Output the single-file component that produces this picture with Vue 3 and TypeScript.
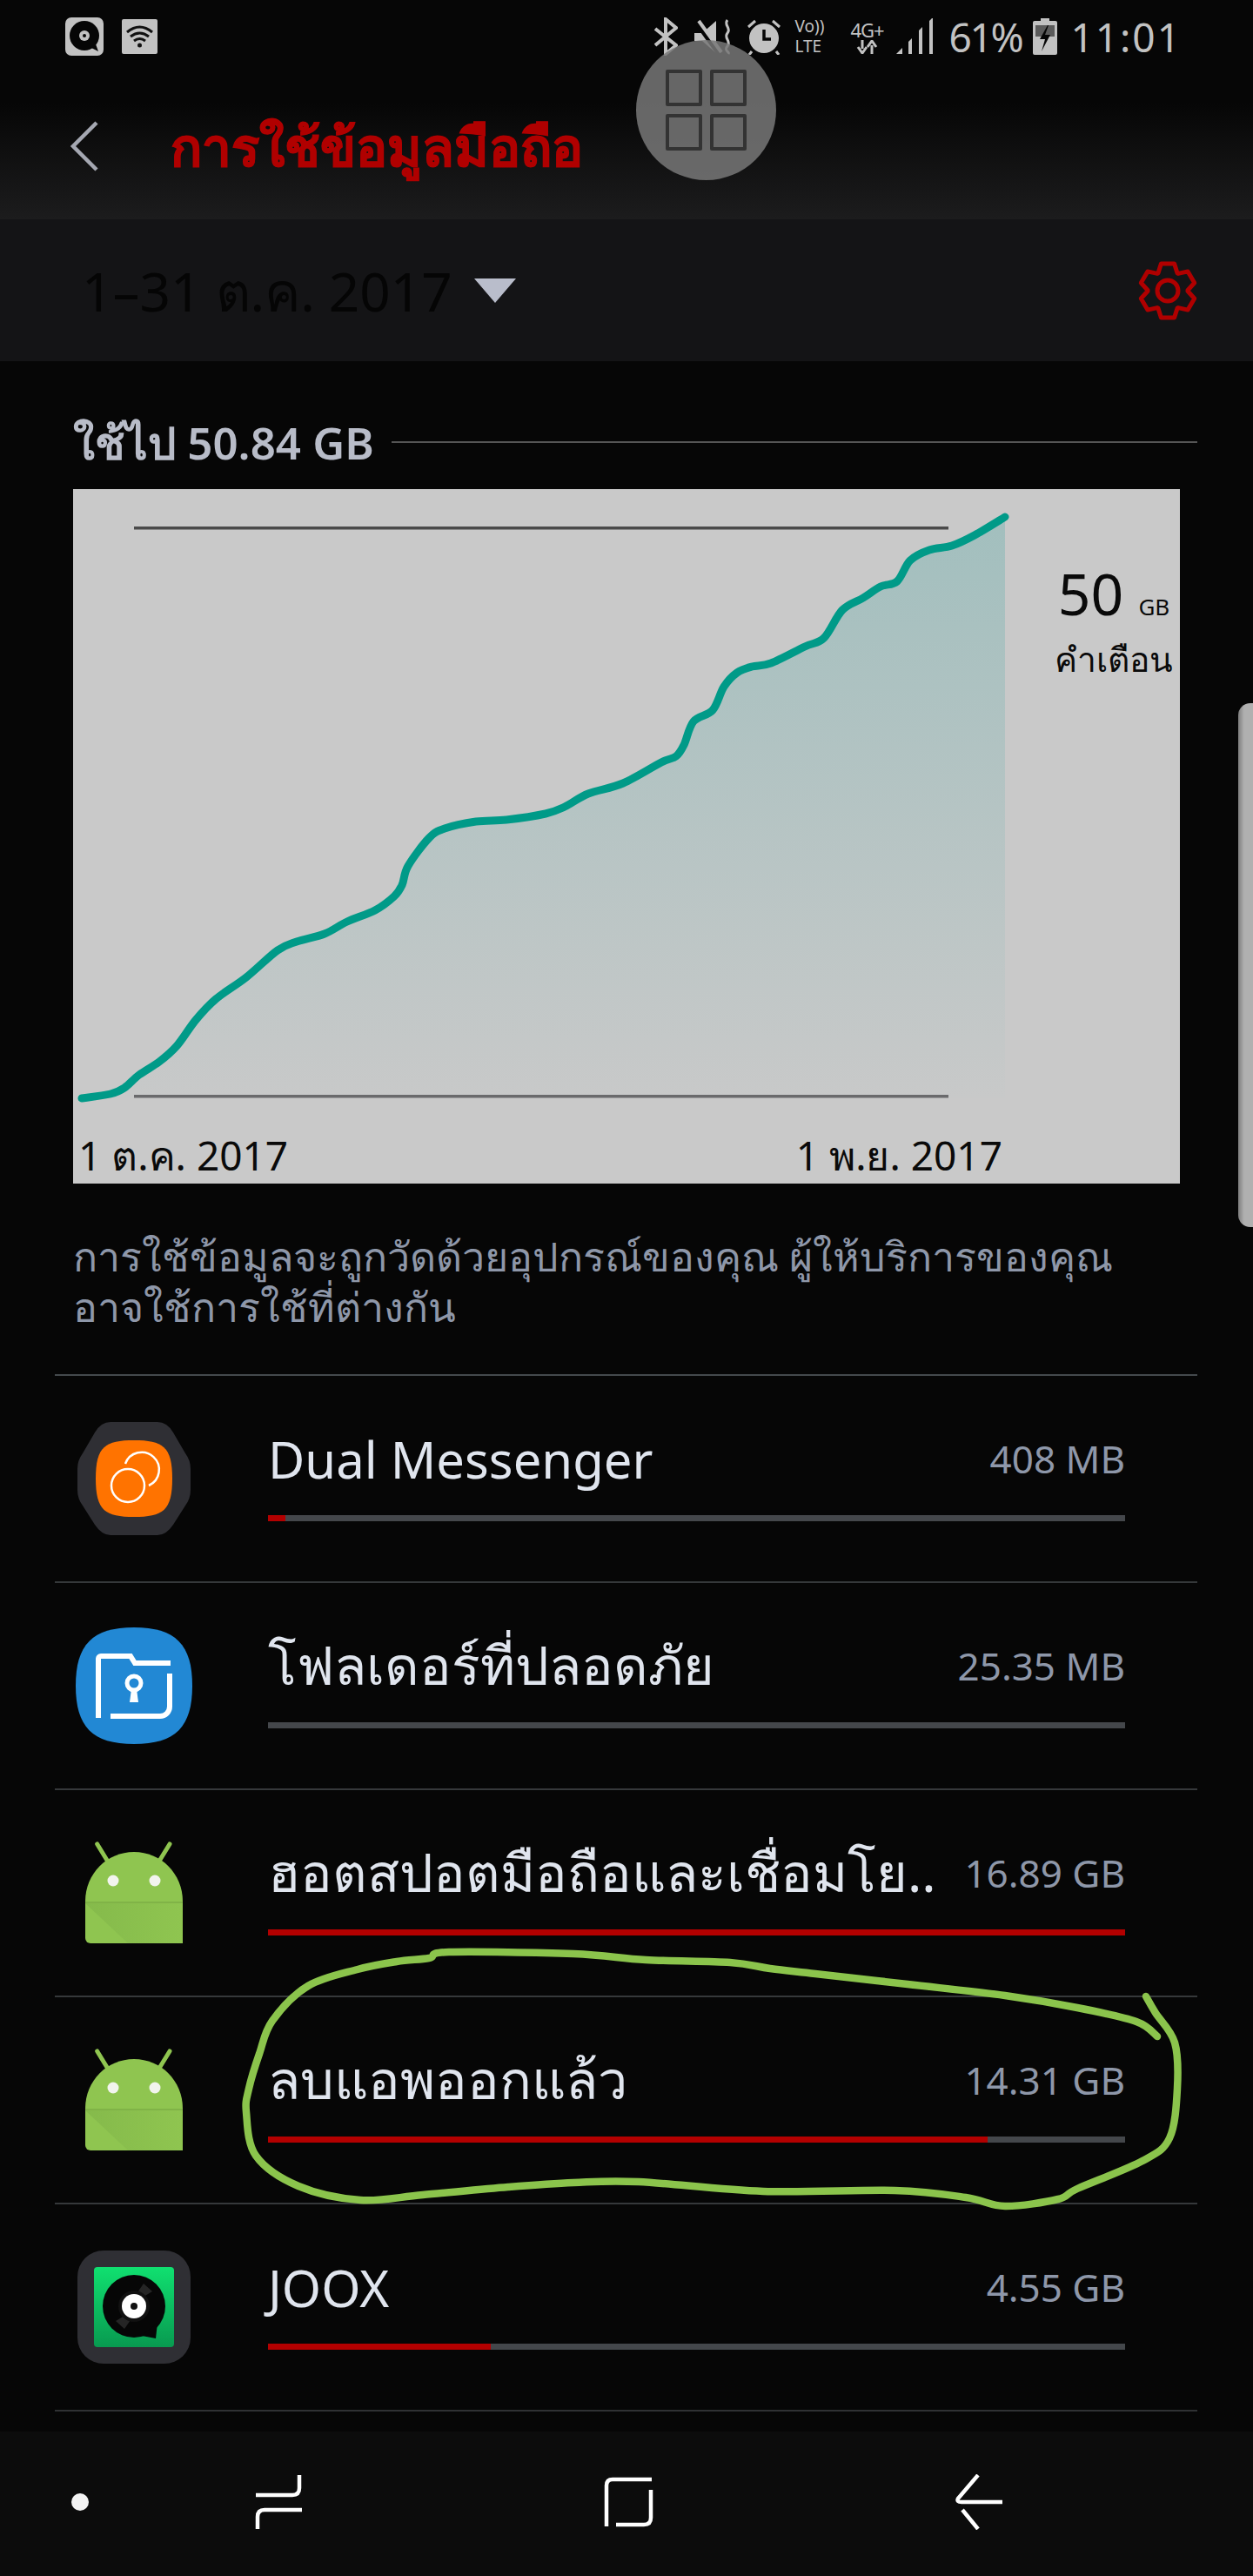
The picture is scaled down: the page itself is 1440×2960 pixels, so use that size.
<script setup lang="ts">
interface AppRow {
  name: string
  size: string
  used: number
  icon: 'dual' | 'folder' | 'android' | 'joox'
  thai: boolean
}

const rows: AppRow[] = [
  { name: 'Dual Messenger', size: '408 MB', used: 2, icon: 'dual', thai: false },
  { name: 'โฟลเดอร์ที่ปลอดภัย', size: '25.35 MB', used: 0, icon: 'folder', thai: true },
  { name: 'ฮอตสปอตมือถือและเชื่อมโย..', size: '16.89 GB', used: 100, icon: 'android', thai: true },
  { name: 'ลบแอพออกแล้ว', size: '14.31 GB', used: 84, icon: 'android', thai: true },
  { name: 'JOOX', size: '4.55 GB', used: 26, icon: 'joox', thai: false },
]

type Pt = [number, number]

// traced from the reference, chart-local coordinates
const usage: Pt[] = [
  [10, 700], [43, 695], [59, 688], [76, 673], [99, 658], [119, 640], [141, 610], [164, 586],
  [199, 561], [235, 530], [257, 520], [289, 511], [315, 497], [347, 484], [369, 468], [378, 455],
  [385, 433], [409, 401], [427, 390], [463, 382], [498, 380], [543, 373], [565, 365], [592, 350],
  [632, 338], [676, 314], [693, 307], [702, 294], [713, 267], [735, 254], [748, 227], [763, 211],
  [780, 204], [802, 200], [841, 181], [863, 171], [884, 139], [908, 125], [928, 112], [947, 106],
  [962, 82], [984, 70], [1010, 65], [1036, 53], [1071, 32],
]

// page coordinates, the hand drawn ring around the removed apps row
const ring: Pt[] = [
  [1330, 2340], [1306, 2323], [1238, 2307], [1155, 2293], [1043, 2280], [937, 2268], [885, 2262],
  [839, 2255], [742, 2252], [659, 2245], [516, 2243], [493, 2250], [456, 2254], [411, 2263],
  [354, 2282], [313, 2322], [298, 2360], [286, 2400], [283, 2427], [294, 2477], [343, 2512],
  [414, 2528], [486, 2522], [584, 2513], [659, 2508], [734, 2507], [877, 2518], [1028, 2517],
  [1110, 2525], [1155, 2535], [1216, 2527], [1238, 2515], [1313, 2483], [1344, 2457], [1353, 2400],
  [1350, 2347], [1328, 2313], [1317, 2294],
]

function smooth(pts: Pt[]): string {
  let d = `M${pts[0][0]} ${pts[0][1]}`
  for (let i = 0; i < pts.length - 1; i++) {
    const p0 = pts[Math.max(i - 1, 0)]
    const p1 = pts[i]
    const p2 = pts[i + 1]
    const p3 = pts[Math.min(i + 2, pts.length - 1)]
    const c1x = p1[0] + (p2[0] - p0[0]) / 6
    const c1y = p1[1] + (p2[1] - p0[1]) / 6
    const c2x = p2[0] - (p3[0] - p1[0]) / 6
    const c2y = p2[1] - (p3[1] - p1[1]) / 6
    d += ` C${c1x.toFixed(1)} ${c1y.toFixed(1)} ${c2x.toFixed(1)} ${c2y.toFixed(1)} ${p2[0]} ${p2[1]}`
  }
  return d
}

const usageLine = smooth(usage)
const usageArea = `${usageLine} L1071 700 L10 700 Z`
const ringPath = smooth(ring)

function gear(): string {
  const out: string[] = []
  for (let i = 0; i < 6; i++) {
    const a = (i * Math.PI) / 3 - Math.PI / 2
    for (const [r, da] of [[23, -0.5], [32, -0.24], [32, 0.24], [23, 0.5]] as Pt[]) {
      out.push(`${(34 + r * Math.cos(a + da)).toFixed(1)},${(35 + r * Math.sin(a + da)).toFixed(1)}`)
    }
  }
  return out.join(' ')
}
const gearPoints = gear()

const squircle = 'M67 0C115 0 134 20 134 67C134 114 115 134 67 134C19 134 0 114 0 67C0 20 19 0 67 0Z'
</script>

<template>
  <div class="phone">
    <div class="status">
      <div class="status-left">
        <svg class="st-app" viewBox="0 0 44 44">
          <rect width="44" height="44" rx="7" fill="#c2c2c2" />
          <circle cx="22" cy="21" r="17" fill="#060606" />
          <path d="M28 34l10 5-4-11z" fill="#060606" />
          <circle cx="22" cy="21" r="6" fill="#c2c2c2" />
          <circle cx="22" cy="21" r="2" fill="#060606" />
        </svg>
        <svg class="st-wifi" viewBox="0 0 41 40">
          <rect width="41" height="40" rx="2" fill="#c2c2c2" />
          <path d="M6 15q14.500-12 29 0M10 20q10.500-8 21 0M14 25q6.500-5 13 0" fill="none" stroke="#111" stroke-width="3" />
          <circle cx="20.500" cy="30" r="2.500" fill="#111" />
        </svg>
      </div>
      <div class="status-right">
        <svg class="st-bt" viewBox="0 0 28 44" fill="none" stroke="#c2c2c2" stroke-width="4">
          <path d="M2 13l24 19-12 10V2l12 10L2 32" />
        </svg>
        <svg class="st-mute" viewBox="0 0 44 42">
          <path d="M0 17h9L25 3v37L9 26H0z" fill="#c2c2c2" />
          <path d="M2 4l26 36" stroke="#060606" stroke-width="6" />
          <path d="M5 3l26 36" stroke="#c2c2c2" stroke-width="4" />
          <path d="M38 2c-5 6 5 9 0 15s5 9 0 15 3 6 1 9" fill="none" stroke="#c2c2c2" stroke-width="3" />
        </svg>
        <svg class="st-alarm" viewBox="0 0 40 42">
          <circle cx="20" cy="23" r="17" fill="#c2c2c2" />
          <path d="M20 13v11h8" fill="none" stroke="#060606" stroke-width="3.500" />
          <path d="M2 10l8-7M38 10l-8-7M6 38l-3 4M34 38l3 4" stroke="#c2c2c2" stroke-width="3" />
        </svg>
        <div class="st-volte">
          <span>Vo))</span>
          <span>LTE</span>
        </div>
        <div class="st-net">
          <span>4G+</span>
          <svg viewBox="0 0 26 16" width="26" height="16">
            <path d="M8 0v10M3 8l5 7 5-7" fill="none" stroke="#c2c2c2" stroke-width="3" />
            <path d="M19 16V6M14 8l5-7 5 7" fill="none" stroke="#c2c2c2" stroke-width="3" />
          </svg>
        </div>
        <svg class="st-signal" viewBox="0 0 42 42">
          <path d="M0 41l7-7v7z" fill="#c2c2c2" />
          <path d="M14 41V27l4-4v18zM26 41V14l4-4v31zM38 41V3l4-4v42z" fill="#c2c2c2" />
        </svg>
        <span class="st-text pct">61%</span>
        <svg class="st-batt" viewBox="0 0 28 42">
          <path d="M9 0h10v3h7a2 2 0 0 1 2 2v35a2 2 0 0 1-2 2H2a2 2 0 0 1-2-2V5a2 2 0 0 1 2-2h7z" fill="#c2c2c2" />
          <rect x="3" y="8" width="22" height="13" fill="#5b5b5b" />
          <path d="M17 8L8 24h6l-4 14 10-19h-6l4-11z" fill="#060606" />
        </svg>
        <span class="st-text time">11:01</span>
      </div>
    </div>

    <header class="topbar">
      <svg class="back" viewBox="0 0 34 58" fill="none" stroke="#a5a8b2" stroke-width="4.500">
        <path d="M31 2L4 29l27 27" />
      </svg>
      <h1 class="title">การใช้ข้อมูลมือถือ</h1>
    </header>

    <div class="period">
      <div class="period-left">
        <span class="period-text">1–31 ต.ค. 2017</span>
        <span class="caret"></span>
      </div>
      <svg class="gear" viewBox="0 0 68 70">
        <polygon :points="gearPoints" fill="none" stroke="#b00000" stroke-width="5" stroke-linejoin="round" />
        <circle cx="34" cy="35" r="12" fill="none" stroke="#b00000" stroke-width="5" />
      </svg>
    </div>

    <main class="content">
      <div class="used-head">
        <span class="used-label">ใช้ไป 50.84 GB</span>
        <span class="used-line"></span>
      </div>

      <section class="chart">
        <svg class="plot" viewBox="0 0 1272 798">
          <defs>
            <linearGradient id="area" x1="0" y1="32" x2="0" y2="700" gradientUnits="userSpaceOnUse">
              <stop offset="0" stop-color="#a2bfbe" />
              <stop offset="1" stop-color="#c8c9c9" />
            </linearGradient>
          </defs>
          <path :d="usageArea" fill="url(#area)" />
          <rect x="70" y="43" width="936" height="3.500" fill="#4a4a4a" />
          <rect x="70" y="696" width="936" height="3.500" fill="#6a6a6c" />
          <path :d="usageLine" fill="none" stroke="#009a88" stroke-width="9" stroke-linecap="round" stroke-linejoin="round" />
        </svg>
        <div class="limit">
          <div class="limit-value">50 <small>GB</small></div>
          <div class="limit-label">คำเตือน</div>
        </div>
        <div class="dates">
          <span>1 ต.ค. 2017</span>
          <span>1 พ.ย. 2017</span>
        </div>
      </section>

      <p class="note">การใช้ข้อมูลจะถูกวัดด้วยอุปกรณ์ของคุณ ผู้ให้บริการของคุณ<br />อาจใช้การใช้ที่ต่างกัน</p>

      <ul class="apps">
        <li v-for="row in rows" :key="row.name + row.size" class="app">
          <svg class="app-icon" viewBox="0 0 134 134">
            <template v-if="row.icon === 'dual'">
              <path d="M40 2H94Q105 2 112 14L126 38Q132 46 132 56V80Q132 90 126 98L112 120Q104 132 94 132H40Q30 132 22 120L8 98Q2 90 2 80V56Q2 46 8 38L22 14Q29 2 40 2Z" fill="#2f2f34" />
              <path d="M67 23C100 23 111 30 111 67C111 104 100 111 67 111C34 111 23 104 23 67C23 30 34 23 67 23Z" fill="#ff7300" />
              <circle cx="60" cy="75" r="19" fill="none" stroke="#fff" stroke-width="2.500" />
              <path d="M57 50A20 20 0 1 1 84 75" fill="none" stroke="#fff" stroke-width="2.500" />
            </template>
            <template v-else-if="row.icon === 'folder'">
              <path :d="squircle" fill="#2288d4" />
              <path d="M26 104V36a3 3 0 0 1 3-3h34l5 8h41" fill="none" stroke="#fff" stroke-width="6" />
              <path d="M108 53v38a11 11 0 0 1-11 11H40" fill="none" stroke="#fff" stroke-width="6" />
              <circle cx="67" cy="64" r="8" fill="none" stroke="#fff" stroke-width="5" />
              <path d="M64 71h6l2 15H62z" fill="#fff" />
            </template>
            <template v-else-if="row.icon === 'android'">
              <defs>
                <linearGradient id="droidfold" x1="0" y1="0" x2="1" y2="0">
                  <stop offset="0" stop-color="#85ba4b" />
                  <stop offset="1" stop-color="#8fc550" />
                </linearGradient>
              </defs>
              <path d="M24.700 11L36.300 30M108 11L96.300 30" stroke="#8fc550" stroke-width="5" stroke-linecap="round" />
              <path d="M11 77C11 45 36 20 67 20C98 20 123 45 123 77V119a6 6 0 0 1-6 6H17a6 6 0 0 1-6-6Z" fill="#8fc550" />
              <path d="M11 77H123V79H11Z" fill="#80b347" />
              <path d="M11 79H123V125H60Z" fill="url(#droidfold)" />
              <circle cx="43" cy="53" r="6.500" fill="#f2f4ee" />
              <circle cx="91" cy="53" r="6.500" fill="#f2f4ee" />
            </template>
            <template v-else>
              <defs>
                <linearGradient id="jooxbg" x1="0" y1="0" x2="0" y2="1">
                  <stop offset="0" stop-color="#10e070" />
                  <stop offset="1" stop-color="#089a50" />
                </linearGradient>
              </defs>
              <rect x="2" y="2" width="130" height="130" rx="30" fill="#2f2f34" />
              <rect x="21" y="21" width="92" height="92" rx="4" fill="url(#jooxbg)" />
              <circle cx="67" cy="66" r="36" fill="#060606" />
              <path d="M92 103l2-18-18 15z" fill="#060606" />
              <path d="M46 83L74 66 56 92zM88 49L60 66 78 40z" fill="#3a3a3a" opacity=".6" />
              <circle cx="67" cy="66" r="18" fill="#111" />
              <circle cx="67" cy="66" r="14" fill="#fff" />
              <circle cx="67" cy="66" r="4" fill="#111" />
            </template>
          </svg>
          <div class="app-info">
            <div class="app-line">
              <span class="app-name" :class="{ thai: row.thai }">{{ row.name }}</span>
              <span class="app-size">{{ row.size }}</span>
            </div>
            <div class="track">
              <div class="fill" :style="{ width: row.used + '%' }"></div>
            </div>
          </div>
        </li>
      </ul>
    </main>

    <nav class="navbar">
      <span class="nav-dot"></span>
      <svg class="nav-icon recents" viewBox="0 0 56 64" fill="none" stroke="#fff" stroke-width="4.500">
        <path d="M52 1V16Q52 24 44 24H2" />
        <path d="M55 41H12Q4 41 4 49V63" />
      </svg>
      <svg class="nav-icon home" viewBox="0 0 58 60" fill="none" stroke="#fff" stroke-width="4.500">
        <path d="M55 4H10Q3 4 3 11V58" />
        <path d="M54 16V48Q54 56 46 56H14" />
      </svg>
      <svg class="nav-icon goback" viewBox="0 0 56 64" fill="none" stroke="#fff" stroke-width="4.500">
        <path d="M27 1L4 28Q2 32 8 32H55" />
        <path d="M9 41L27 63" />
      </svg>
    </nav>

    <div class="assist">
      <span v-for="n in 4" :key="n"></span>
    </div>
    <div class="edge-handle"></div>
    <svg class="scribble" viewBox="0 0 1440 2960">
      <path :d="ringPath" fill="none" stroke="#8bc44c" stroke-width="8.500" stroke-linecap="round" stroke-linejoin="round" />
    </svg>
  </div>
</template>

<style scoped>
.phone {
  position: relative;
  display: flex;
  flex-direction: column;
  width: 1440px;
  height: 2960px;
  overflow: hidden;
  background: #060606;
  font-family: "Noto Sans", "DejaVu Sans", "Liberation Sans", sans-serif;
}

.status {
  display: flex;
  justify-content: space-between;
  align-items: center;
  height: 84px;
  padding: 0 82px 0 75px;
  box-sizing: border-box;
  flex: none;
}
.status-left {
  display: flex;
  align-items: center;
  gap: 21px;
}
.status-right {
  display: flex;
  align-items: center;
  color: #c2c2c2;
}
.st-app { width: 44px; height: 44px; }
.st-wifi { width: 41px; height: 40px; }
.st-bt { width: 28px; height: 44px; }
.st-mute { width: 44px; height: 42px; margin-left: 19px; }
.st-alarm { width: 40px; height: 42px; margin-left: 16px; }
.st-volte {
  display: flex;
  flex-direction: column;
  width: 40px;
  margin-left: 15px;
  font-size: 19px;
  line-height: 23px;
}
.st-net {
  display: flex;
  flex-direction: column;
  align-items: center;
  width: 42px;
  margin-left: 22px;
  font-size: 22px;
  line-height: 24px;
  letter-spacing: -1px;
}
.st-signal { width: 42px; height: 42px; margin-left: 13px; }
.st-text {
  font-size: 46px;
  line-height: 48px;
}
.pct { margin-left: 18px; letter-spacing: -2.300px; }
.st-batt { width: 28px; height: 42px; margin-left: 13px; }
.time { margin-left: 15px; letter-spacing: 2px; }

.topbar {
  display: flex;
  align-items: center;
  flex: none;
  height: 168px;
  padding: 0 0 0 80px;
  box-sizing: border-box;
  background: linear-gradient(#060606 20%, #1c1c1d);
}
.back { width: 34px; height: 58px; }
.title {
  margin: 0 0 0 82px;
  color: #b00000;
  font-size: 60px;
  line-height: 80px;
  font-weight: 700;
  -webkit-text-stroke: 1px #b00000;
}

.period {
  display: flex;
  justify-content: space-between;
  align-items: center;
  flex: none;
  height: 163px;
  padding: 0 64px 0 94px;
  box-sizing: border-box;
  background: #141416;
}
.period-left {
  display: flex;
  align-items: center;
  gap: 25px;
}
.period-text {
  color: #050505;
  font-size: 62px;
  line-height: 70px;
}
.caret {
  width: 0;
  height: 0;
  border-left: 24px solid transparent;
  border-right: 24px solid transparent;
  border-top: 28px solid #b9bdcb;
}
.gear { width: 68px; height: 70px; }

.content {
  flex: 1;
  display: flex;
  flex-direction: column;
}
.used-head {
  display: flex;
  align-items: center;
  gap: 20px;
  height: 55px;
  margin: 65px 64px 0 84px;
}
.used-label {
  padding-top: 4px;
  color: #b8bcc8;
  font-size: 51px;
  font-weight: 600;
  white-space: nowrap;
}
.used-line {
  flex: 1;
  height: 2px;
  background: #555;
}

.chart {
  position: relative;
  width: 1272px;
  height: 798px;
  margin: 27px 0 0 84px;
  background: #c9c9c9;
  color: #0a0a0a;
}
.plot {
  display: block;
  width: 100%;
  height: 100%;
}
.limit {
  position: absolute;
  top: 84px;
  right: 8px;
  width: 136px;
  text-align: center;
}
.limit-value {
  font-size: 66px;
  line-height: 70px;
}
.limit-value small { font-size: 26px; }
.limit-label {
  font-size: 39px;
  line-height: 49px;
}
.dates {
  position: absolute;
  left: 6px;
  bottom: 5px;
  display: flex;
  justify-content: space-between;
  width: 1062px;
  font-size: 46px;
  line-height: 56px;
}

.note {
  margin: 54px 0 0 84px;
  color: #8e97a9;
  font-size: 46.500px;
  line-height: 58px;
}

.apps {
  margin: 49px 64px 0 63px;
  padding: 0;
  list-style: none;
  border-bottom: 2px solid #2f3133;
}
.app {
  display: flex;
  align-items: center;
  height: 238px;
  box-sizing: border-box;
  border-top: 2px solid #35383a;
}
.app:first-child { border-top-color: #44494c; }
.app-icon {
  width: 134px;
  height: 134px;
  margin-left: 24px;
  flex: none;
}
.app-info {
  align-self: flex-start;
  flex: 1;
  margin: 30px 83px 0 87px;
}
.app-line {
  display: flex;
  justify-content: space-between;
  align-items: center;
  height: 130px;
}
.app-name {
  color: #e0e5ee;
  font-size: 58px;
  white-space: nowrap;
}
.app-name.thai { font-size: 61px; }
.app-size {
  color: #8e97a9;
  font-size: 44px;
  white-space: nowrap;
}
.track {
  height: 7px;
  background: #44474b;
}
.fill {
  height: 100%;
  background: #b30000;
}

.navbar {
  flex: none;
  display: flex;
  align-items: center;
  height: 168px;
  padding: 0 0 6px 82px;
  box-sizing: border-box;
  margin-top: 23px;
  background: #0c0c0c;
}
.nav-dot {
  width: 20px;
  height: 20px;
  border-radius: 50%;
  background: #f4f4f4;
}
.nav-icon { flex: none; }
.recents { width: 56px; height: 64px; margin-left: 190px; }
.home { width: 58px; height: 60px; margin-left: 346px; }
.goback { width: 56px; height: 64px; margin-left: 345px; }

.assist {
  position: absolute;
  top: 46px;
  left: 731px;
  display: grid;
  grid-template-columns: 42px 42px;
  grid-auto-rows: 42px;
  gap: 9px;
  align-content: center;
  justify-content: center;
  width: 161px;
  height: 161px;
  border-radius: 50%;
  background: rgba(120, 120, 120, 0.85);
}
.assist span {
  border: 4px solid #333;
  border-radius: 2px;
}
.edge-handle {
  position: absolute;
  top: 808px;
  left: 1423px;
  width: 17px;
  height: 602px;
  border-radius: 14px 0 0 14px;
  background: linear-gradient(90deg, #7d7d7d, #b0b0b0 40%);
}
.scribble {
  position: absolute;
  inset: 0;
  width: 1440px;
  height: 2960px;
  pointer-events: none;
}
</style>

<style>
body {
  margin: 0;
  background: #060606;
}
</style>
